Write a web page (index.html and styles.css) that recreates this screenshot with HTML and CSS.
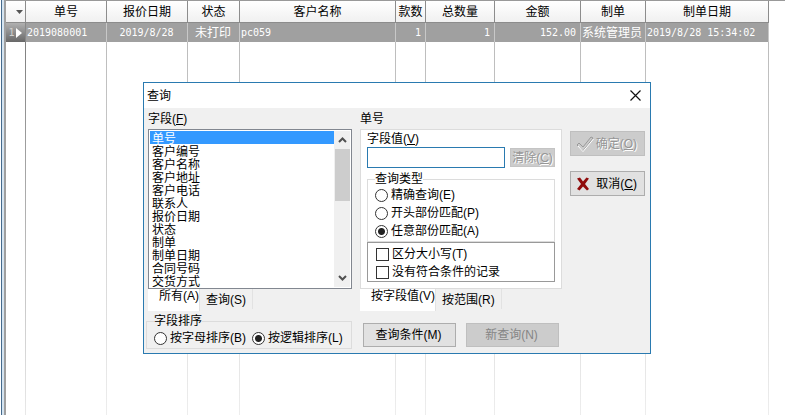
FILE: index.html
```
<!DOCTYPE html>
<html lang="zh-CN">

<head>
    <meta charset="utf-8">
    <title>查询</title>
    <link rel="stylesheet" href="styles.css">
</head>

<body>
    <div class="edge"></div>
    <main class="grid">
        <table>
            <colgroup>
                <col class="c-mark">
                <col class="c-no">
                <col class="c-date">
                <col class="c-state">
                <col class="c-client">
                <col class="c-kinds">
                <col class="c-total">
                <col class="c-amount">
                <col class="c-user">
                <col class="c-time">
            </colgroup>
            <thead>
                <tr>
                    <th class="mark"><svg width="7" height="4" viewBox="0 0 7 4"><path d="M0 0h7L3.5 4z" fill="#555"/></svg></th>
                    <th>单号</th>
                    <th>报价日期</th>
                    <th>状态</th>
                    <th>客户名称</th>
                    <th>款数</th>
                    <th>总数量</th>
                    <th>金额</th>
                    <th>制单</th>
                    <th>制单日期</th>
                </tr>
            </thead>
            <tbody>
                <tr class="current">
                    <td class="mark"><span>1</span><svg width="7" height="10" viewBox="0 0 7 10"><path d="M0 0l6 5-6 5z" fill="#fff"/></svg></td>
                    <td>2019080001</td>
                    <td class="center">2019/8/28</td>
                    <td class="center">未打印</td>
                    <td>pc059</td>
                    <td class="num">1</td>
                    <td class="num">1</td>
                    <td class="num">152.00</td>
                    <td>系统管理员</td>
                    <td>2019/8/28 15:34:02</td>
                </tr>
                <tr class="filler">
                    <td></td><td></td><td></td><td></td><td></td>
                    <td></td><td></td><td></td><td></td><td></td>
                </tr>
            </tbody>
        </table>
    </main>

    <form class="window" role="dialog" aria-labelledby="title">
        <header class="titlebar">
            <span id="title">查询</span>
            <button type="button" class="close" aria-label="关闭">
                <svg width="11" height="11" viewBox="0 0 11 11"><path d="M.5.5l10 10M10.5.5l-10 10" stroke="#111" stroke-width="1.2"/></svg>
            </button>
        </header>
        <div class="content">
            <section class="fields">
                <label class="caption" for="field">字段(<u>F</u>)</label>
                <div class="listbox">
                    <select id="field" size="12">
                        <option selected>单号</option>
                        <option>客户编号</option>
                        <option>客户名称</option>
                        <option>客户地址</option>
                        <option>客户电话</option>
                        <option>联系人</option>
                        <option>报价日期</option>
                        <option>状态</option>
                        <option>制单</option>
                        <option>制单日期</option>
                        <option>合同号码</option>
                        <option>交货方式</option>
                    </select>
                    <div class="scrollbar">
                        <svg width="15" height="18" viewBox="0 0 15 18"><path d="M4 11l3.500-3.500L11 11" fill="none" stroke="#505050" stroke-width="2"/></svg>
                        <div class="thumb"></div>
                        <svg width="15" height="18" viewBox="0 0 15 18"><path d="M4 7l3.500 3.500L11 7" fill="none" stroke="#505050" stroke-width="2"/></svg>
                    </div>
                </div>
                <div class="tabs">
                    <button type="button" class="tab active">所有(A)</button>
                    <button type="button" class="tab">查询(S)</button>
                </div>
            </section>

            <section class="value">
                <div class="caption">单号</div>
                <div class="panel">
                    <label class="value-label" for="value">字段值(<u>V</u>)</label>
                    <div class="value-row">
                        <input type="text" id="value">
                        <button type="button" class="clear" disabled>清除(<u>C</u>)</button>
                    </div>
                    <fieldset class="kind">
                        <legend>查询类型</legend>
                        <label><input type="radio" name="kind">精确查询(E)</label>
                        <label><input type="radio" name="kind">开头部份匹配(P)</label>
                        <label><input type="radio" name="kind" checked>任意部份匹配(A)</label>
                    </fieldset>
                    <div class="options">
                        <label><input type="checkbox">区分大小写(T)</label>
                        <label><input type="checkbox">没有符合条件的记录</label>
                    </div>
                </div>
                <div class="tabs">
                    <button type="button" class="tab active">按字段值(V)</button>
                    <button type="button" class="tab">按范围(R)</button>
                </div>
            </section>

            <section class="actions">
                <button type="button" class="btn" disabled>
                    <svg width="18" height="16" viewBox="0 0 18 16"><path d="M1 9l2-2 4 4L15 1l2 1L7 15z" fill="#ccc" stroke="#999"/><path d="M2 10l5 5.500L17.500 3" fill="none" stroke="#fff"/></svg>
                    <span>确定(<u>O</u>)</span>
                </button>
                <button type="button" class="btn">
                    <svg width="14" height="14" viewBox="0 0 14 14"><path d="M1 1.500L4 .5 7 4.500 10.500.5 13 1.500 9 7l4 5-2 1.500-4-4-3.500 4L1 12l4-5z" fill="#900c0c"/></svg>
                    <span>取消(<u>C</u>)</span>
                </button>
            </section>

            <fieldset class="order">
                <legend>字段排序</legend>
                <label><input type="radio" name="order">按字母排序(B)</label>
                <label><input type="radio" name="order" checked>按逻辑排序(L)</label>
            </fieldset>

            <div class="queries">
                <button type="button" class="btn">查询条件(M)</button>
                <button type="button" class="btn flat" disabled>新查询(N)</button>
            </div>
        </div>
    </form>
</body>

</html>
```

FILE: styles.css
```
* {
    box-sizing: border-box;
}

html,
body {
    height: 100%;
    margin: 0;
}

body {
    display: flex;
    position: relative;
    overflow: hidden;
    background: #fff;
    color: #000;
    font: 12px/14px "Liberation Sans", "Noto Sans CJK SC", sans-serif;
}

button,
input,
select {
    margin: 0;
    font: inherit;
    color: inherit;
}

svg {
    display: block;
    flex: none;
}

/* main window edge */
.edge {
    flex: 0 0 6px;
    background: linear-gradient(to right, #fff 1px, #456a8c 1px 2px, #d5e4f0 2px 4px, #a0a0a0 4px);
}

/* data grid */
.grid {
    flex: 1;
    border-top: 1px solid #999;
}

table {
    height: 100%;
    table-layout: fixed;
    width: 763px;
    border-collapse: separate;
    border-spacing: 0;
}

.c-mark { width: 20px; }
.c-no,
.c-date { width: 81px; }
.c-state { width: 52px; }
.c-client { width: 156px; }
.c-kinds { width: 30px; }
.c-total { width: 69px; }
.c-amount { width: 86px; }
.c-user { width: 65px; }
.c-time { width: 123px; }

th {
    height: 22px;
    padding: 0;
    font-weight: normal;
    background: linear-gradient(#fff, #f0f0f0);
    border-right: 1px solid #8c8c8c;
    border-bottom: 1px solid #8c8c8c;
}

th.mark svg {
    margin-left: 10px;
}

td {
    padding: 0;
}

.current td {
    height: 19px;
    padding: 0 2px 0 1px;
    background: #a0a0a0;
    border-right: 1px solid #c8c8c8;
    color: #fff;
    font-family: "DejaVu Sans Mono", "Noto Sans CJK SC", monospace;
    font-size: 10px;
    white-space: nowrap;
}

.current td:nth-child(4),
.current td:nth-child(9) {
    font-size: 12px;
}

.current td.center {
    text-align: center;
}

.current td.num {
    padding-right: 4px;
    text-align: right;
}

.current td.mark {
    background: linear-gradient(#b0b0b0, #686868);
    border-right-color: #888;
}

td.mark span {
    display: inline-block;
    width: 9px;
    text-align: center;
    color: #d0d0d0;
}

td.mark svg {
    display: inline-block;
    vertical-align: middle;
}

/* column lines fade out towards the bottom */
.filler td {
    background: linear-gradient(#bcbcbc, #c8c8c8 30%, #ededed) right / 1px 100% no-repeat;
}

.filler td:first-child {
    background-image: linear-gradient(#808080, #a0a0a0 30%, #e8e8e8);
}

/* query window */
.window {
    position: absolute;
    left: 143px;
    top: 82px;
    width: 508px;
    background: #f0f0f0;
    border: 1px solid #2a7ab0;
}

.titlebar {
    display: flex;
    align-items: center;
    justify-content: space-between;
    height: 25px;
    padding: 0 9px 0 3px;
    background: #fff;
}

.close {
    padding: 0;
    border: 0;
    background: none;
}

.content {
    display: grid;
    grid-template-columns: 206px minmax(0, 1fr) 75px;
    gap: 3px 8px;
    padding: 0 5px 4px 2px;
}

.caption {
    display: block;
    height: 21px;
    line-height: 22px;
}

.fields {
    padding-left: 2px;
}

.listbox {
    display: flex;
    height: 160px;
    padding: 1px;
    background: #fff;
    border: 1px solid #828790;
}

.listbox select {
    flex: 1;
    min-width: 0;
    height: 156px;
    padding: 0;
    border: 0;
    border-radius: 0;
    outline: 0;
    background: #fff;
    scrollbar-width: none;
}

.listbox option {
    display: flex;
    align-items: center;
    height: 13px;
    min-height: 13px;
    padding: 0 2px;
}

.listbox option:checked {
    background: #3399ff linear-gradient(#3399ff, #3399ff);
    color: #fff;
}

.scrollbar {
    display: flex;
    flex-direction: column;
    width: 16px;
    padding-left: 1px;
    background: #f0f0f0;
}

.scrollbar svg:last-child {
    margin-top: auto;
}

.thumb {
    height: 52px;
    background: #cdcdcd;
}

.tabs {
    display: flex;
    align-items: flex-start;
    height: 22px;
}

.tab {
    height: 20px;
    padding: 2px 6px 0;
    border: 0;
    border-right: 1px solid #e2e2e2;
    background: none;
    line-height: 18px;
    white-space: nowrap;
}

.tab.active {
    height: 22px;
    padding: 0 0 8px 11px;
    background: #fff;
    line-height: 14px;
}

.panel {
    height: 160px;
    padding: 1px 6px;
    background: #fff;
    border: 1px solid #dcdcdc;
}

.value-label {
    display: block;
    line-height: 16px;
}

.value-row {
    display: flex;
    align-items: center;
    gap: 5px;
}

.value-row input {
    appearance: none;
    flex: 1;
    min-width: 0;
    height: 21px;
    padding: 0 3px;
    border: 1px solid #2a7ab0;
    border-radius: 0;
    background: #fff;
}

.clear {
    width: 45px;
    height: 19px;
    padding: 0;
    border: 1px solid #c4c4c4;
    background: #ccc;
    line-height: 16px;
}

.clear:disabled,
.btn:disabled {
    color: #969696;
    text-shadow: 1px 1px #fff;
}

fieldset {
    min-width: 0;
    margin: 0;
    padding: 0 7px;
    border: 1px solid #dcdcdc;
}

legend {
    padding: 0;
    line-height: 14px;
}

.kind {
    margin-top: 4px;
    height: 70px;
}

.kind label,
.options label {
    display: flex;
    align-items: center;
    gap: 3px;
    height: 18px;
}

.options {
    height: 40px;
    padding: 2px 8px 0;
    border: 1px solid #999;
}

input[type="radio"],
input[type="checkbox"] {
    appearance: none;
    flex: none;
    width: 13px;
    height: 13px;
    border: 1px solid #333;
    background: #fff;
}

input[type="radio"] {
    border-radius: 50%;
}

input[type="radio"]:checked {
    background: radial-gradient(circle, #222 3px, #fff 4px);
}

.actions {
    display: flex;
    flex-direction: column;
    gap: 15px;
    padding-top: 23px;
}

.btn {
    display: flex;
    align-items: center;
    justify-content: space-between;
    height: 25px;
    padding: 0 7px 0 5px;
    border: 1px solid #adadad;
    background: #e1e1e1;
    white-space: nowrap;
}

.btn:disabled {
    border-color: #bfbfbf;
    background: #ccc;
}

.order {
    display: flex;
    align-items: center;
    gap: 6px;
    height: 35px;
}

.order label {
    display: flex;
    align-items: center;
    gap: 3px;
    height: 20px;
    white-space: nowrap;
}

.queries {
    display: flex;
    gap: 10px;
    padding: 9px 3px 0;
}

.queries .btn {
    flex: 1;
    height: 24px;
    justify-content: center;
}

.btn.flat:disabled {
    color: #858585;
    text-shadow: none;
}
```
